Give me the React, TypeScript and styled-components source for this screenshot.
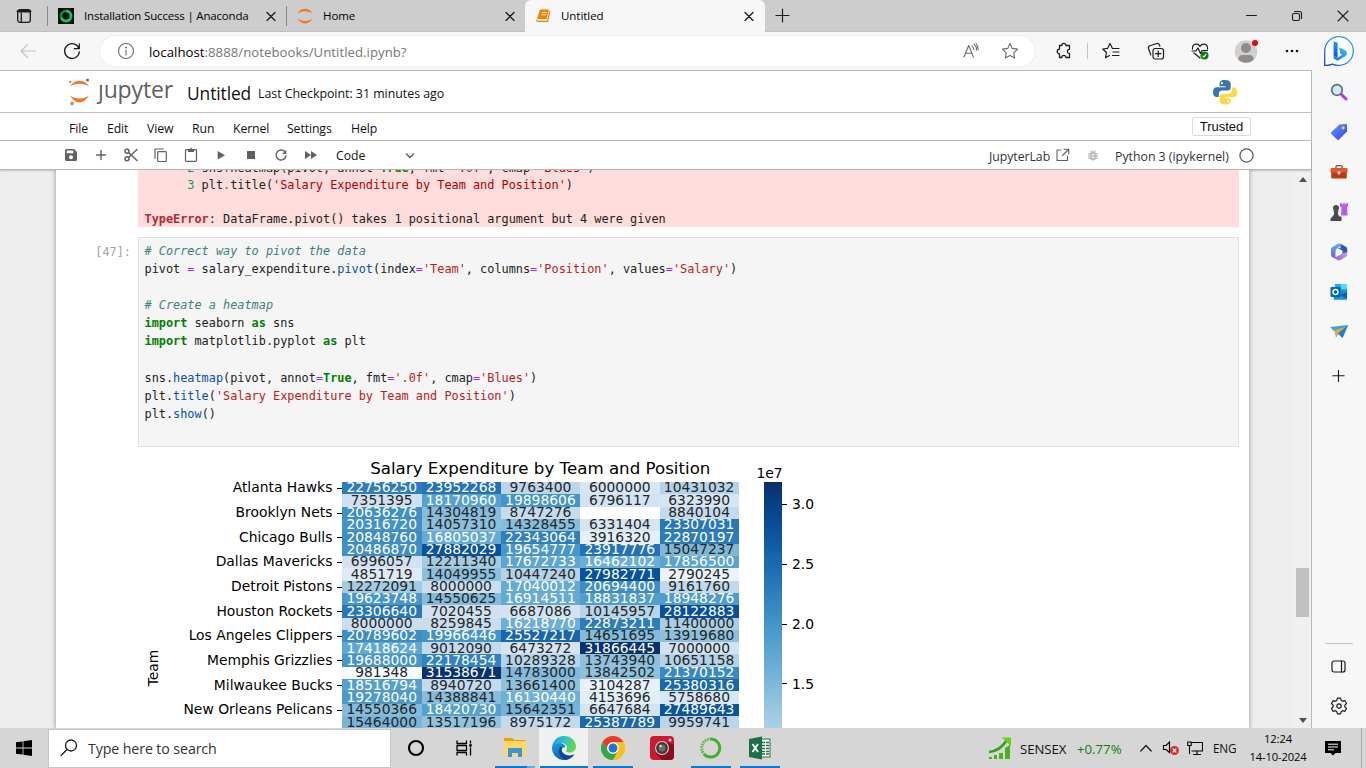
import React from "react";
import styled, { createGlobalStyle } from "styled-components";

const Global = createGlobalStyle`
  * { box-sizing: border-box; }
  html, body { margin: 0; padding: 0; overflow: hidden; }
  body { font-family: "Open Sans", "Noto Sans", sans-serif; color: #111; }
  svg { display: block; flex: none; }
`;

/* ---------- shared pieces ---------- */

const Screen = styled.div`
  width: 1366px;
  height: 768px;
  display: flex;
  flex-direction: column;
  background: #f7f7f7;
  overflow: hidden;
`;

const Slot = styled.div<{ $w: number; $ml?: number; $bg?: string }>`
  width: ${(p) => p.$w}px;
  margin-left: ${(p) => p.$ml ?? 0}px;
  background: ${(p) => p.$bg ?? "transparent"};
  height: 100%;
  flex: none;
  display: flex;
  align-items: center;
  justify-content: center;
`;

const Label = styled.span<{ $size: number; $ls?: number; $color?: string; $ml?: number; $w?: number; $mt?: number }>`
  font-size: ${(p) => p.$size}px;
  letter-spacing: ${(p) => p.$ls ?? 0}px;
  color: ${(p) => p.$color ?? "#111"};
  margin-left: ${(p) => p.$ml ?? 0}px;
  margin-top: ${(p) => p.$mt ?? 0}px;
  width: ${(p) => (p.$w ? p.$w + "px" : "auto")};
  flex: none;
  white-space: pre;
  line-height: 20px;
`;

const Host = styled.span`
  color: #000;
`;

const Grow = styled.div`
  flex: 1;
`;

type IconProps = { w: number; h?: number; children: React.ReactNode; color?: string; sw?: number };
const Line = ({ w, h = w, children, color = "#1b1b1b", sw = 1.1 }: IconProps) => (
  <svg width={w} height={h} viewBox={`0 0 ${w} ${h}`} fill="none" stroke={color} strokeWidth={sw} strokeLinecap="round" strokeLinejoin="round">
    {children}
  </svg>
);
const Solid = ({ w, h = w, children, color = "#616161" }: IconProps) => (
  <svg width={w} height={h} viewBox={`0 0 ${w} ${h}`} fill={color}>
    {children}
  </svg>
);

/* ---------- tab strip ---------- */

const TabStrip = styled.div`
  height: 32px;
  flex: none;
  display: flex;
  background: #cdcdcd;
  border-bottom: 1px solid #c0c0c0;
`;

const Divider = styled.div<{ $h: number; $color: string }>`
  width: 1px;
  height: ${(p) => p.$h}px;
  align-self: center;
  background: ${(p) => p.$color};
  flex: none;
`;

const Tab = styled.div<{ $w: number; $active?: boolean }>`
  width: ${(p) => p.$w}px;
  height: ${(p) => (p.$active ? 32 : 31)}px;
  flex: none;
  display: flex;
  align-items: center;
  padding: 0 0 ${(p) => (p.$active ? 1 : 0)}px 10px;
  background: ${(p) => (p.$active ? "#f7f7f7" : "transparent")};
  border-radius: 6px 6px 0 0;
`;

const TabTitle = styled.span<{ $ls: number }>`
  flex: 1;
  margin-left: 10px;
  font-size: 11.5px;
  letter-spacing: ${(p) => p.$ls}px;
  white-space: nowrap;
  color: #000;
`;

const CloseX = () => (
  <Line w={10} sw={1.3}>
    <path d="M1 1.500L9 9.500M9 1.500L1 9.500" />
  </Line>
);

const JupyterMoons = () => (
  <svg width="16" height="16" viewBox="0 0 16 16" fill="#f37726">
    <path d="M.8 5.600C2 2.600 4.600 .7 8 .7s6 1.900 7.200 4.900C13.400 4.100 10.900 3.200 8 3.200S2.600 4.100 .8 5.600z" />
    <path d="M.8 10.600C2 13.600 4.600 15.500 8 15.500s6-1.900 7.200-4.900C13.400 12.100 10.900 13 8 13S2.600 12.100 .8 10.600z" />
  </svg>
);

const Tabs = () => (
  <TabStrip>
    <Slot $w={47}>
      <Line w={16} sw={1.3}>
        <rect x="1.700" y="1.700" width="12.600" height="12.600" rx="2.200" />
        <path d="M2 3.300h12" strokeWidth="2.600" />
        <path d="M5.300 5v9" />
      </Line>
    </Slot>
    <Divider $h={20} $color="#8a8a8a" />
    <Tab $w={238}>
      <svg width="16" height="16" viewBox="0 0 16 16">
        <rect width="16" height="16" fill="#0a0f12" />
        <circle cx="8" cy="8" r="5" fill="none" stroke="#0e8f3c" strokeWidth="2.600" />
        <path d="M8 3A5 5 0 1 1 3.500 10" fill="none" stroke="#1fc258" strokeWidth="2.600" />
      </svg>
      <TabTitle $ls={-0.18}>Installation Success | Anaconda</TabTitle>
      <Slot $w={30}><CloseX /></Slot>
    </Tab>
    <Divider $h={20} $color="#8a8a8a" />
    <Tab $w={238}>
      <JupyterMoons />
      <TabTitle $ls={-0.1}>Home</TabTitle>
      <Slot $w={30}><CloseX /></Slot>
    </Tab>
    <Tab $w={240} $active>
      <svg width="16" height="16" viewBox="0 0 16 16">
        <path d="M5 1.500h9L11.500 11H3.500Q2.200 11 1.800 12z" fill="#f77f00" />
        <path d="M14.900 3.200L12.500 13.300H3Q1.600 13.300 1.700 11.700" fill="none" stroke="#f77f00" strokeWidth="1.200" />
        <path d="M6.900 4.500h4.800M6.300 6.700h4.800" stroke="#fff" strokeWidth="1" />
      </svg>
      <TabTitle $ls={-0.05}>Untitled</TabTitle>
      <Slot $w={32}><CloseX /></Slot>
    </Tab>
    <Slot $w={35}>
      <Line w={15} sw={1.2}><path d="M7.500 1v13M1 7.500h13" /></Line>
    </Slot>
    <Grow />
    <Slot $w={46}><Line w={11} sw={1}><path d="M.5 5.500h10" /></Line></Slot>
    <Slot $w={46}>
      <Line w={12} sw={1.1}>
        <rect x="1.500" y="3.500" width="7" height="7" rx="1.500" />
        <path d="M3.500 1.500H8.500a2 2 0 0 1 2 2V8.500" />
      </Line>
    </Slot>
    <Slot $w={46}><Line w={12} sw={1.1}><path d="M1 1L11 11M11 1L1 11" /></Line></Slot>
  </TabStrip>
);

/* ---------- address bar ---------- */

const NavBar = styled.div`
  height: 38px;
  flex: none;
  display: flex;
  align-items: center;
  padding-left: 6px;
  background: #f7f7f7;
`;

const Omnibox = styled.div`
  width: 935px;
  height: 30px;
  margin-left: 6px;
  border-radius: 15px;
  background: #fff;
  box-shadow: 0 0 2px rgba(0, 0, 0, 0.12);
  display: flex;
  align-items: center;
  padding: 0 6px 0 17px;
`;

const BingIcon = () => (
  <svg width="32" height="32" viewBox="0 0 32 32">
    <defs>
      <linearGradient id="bingRing" x1="1" y1="0" x2="0" y2="1">
        <stop offset="0" stopColor="#22a7e8" />
        <stop offset=".5" stopColor="#2b8fe6" />
        <stop offset="1" stopColor="#1c3fae" />
      </linearGradient>
      <linearGradient id="bingB" x1="0" y1="0" x2="0" y2="1">
        <stop offset="0" stopColor="#1ba0f2" />
        <stop offset="1" stopColor="#174ae0" />
      </linearGradient>
      <linearGradient id="bingC" x1="0" y1="1" x2="1" y2="0">
        <stop offset="0" stopColor="#1a6ff0" />
        <stop offset="1" stopColor="#36c6f4" />
      </linearGradient>
    </defs>
    <path d="M1.700 30.300V16A14.300 14.300 0 1 1 16 30.300Q12 30.500 9.500 29.200Q6 30.600 1.700 30.300z" fill="#fff" stroke="url(#bingRing)" strokeWidth="1.300" />
    <path d="M10.600 6.200l4 1.600v14.900l-4-2.200z" fill="url(#bingB)" />
    <path d="M16 12.300l6.500 3.200q1.800 1 1.400 3.400-.3 1.600-2 2.600l-7.300 4.200-4-2.300v-2.900l4 2.200 4.500-3-1.800-1z" fill="url(#bingC)" />
  </svg>
);

const Navigation = () => (
  <NavBar>
    <Slot $w={44}><Line w={16} color="#c2c2c2"><path d="M15.500 8H1M7.500 1.500L1 8l6.500 6.500" /></Line></Slot>
    <Slot $w={44}>
      <Line w={18} sw={1.3}><path d="M16 6.500A7.400 7.400 0 1 0 16.400 9.800M16.300 1.800v4.900h-4.900" /></Line>
    </Slot>
    <Omnibox>
      <Line w={18} color="#6b6b6b">
        <circle cx="9" cy="9" r="7.500" />
        <path d="M9 8v5" />
        <circle cx="9" cy="5.500" r=".4" />
      </Line>
      <Label $size={13.2} $ls={0.03} $ml={14} $mt={1} $color="#777">
        <Host>localhost</Host>:8888/notebooks/Untitled.ipynb?
      </Label>
      <Grow />
      <Slot $w={39}>
        <Line w={18} color="#6b6b6b">
          <path d="M2 15L6.700 3.500L11.400 15M3.500 11.300h6.400M10 3.800q1.800 1.500 1.800 4M12 2.200q2.700 2.300 2.700 6M14 1.500q2.200 2.500 2.200 6" />
        </Line>
      </Slot>
      <Slot $w={39}>
        <Line w={18} color="#6b6b6b">
          <path d="M9 1.500l2.300 4.900 5.300.7-3.900 3.700 1 5.300L9 13.500l-4.700 2.600 1-5.300L1.400 7.100l5.300-.7z" />
        </Line>
      </Slot>
    </Omnibox>
    <Slot $w={46} $ml={6}>
      <Line w={18} sw={1.3}>
        <path d="M4.500 3.500H6.800a2.100 2.100 0 0 1 4.200 0H14.500V7.300a2.100 2.100 0 0 0 0 4.200v4H11a2.100 2.100 0 0 0-4.200 0H4.500V11.800a2.200 2.200 0 1 1 0-4.600z" />
      </Line>
    </Slot>
    <Divider $h={16} $color="#c4c4c4" />
    <Slot $w={46}>
      <Line w={18} sw={1.2}>
        <path d="M10.500 6.500L8 1.500L5.700 6.300l-5 .7 3.700 3.500-.9 5.200 4-2.200M11 6.500h6M11 10h6M10.500 13.500h6.500" />
      </Line>
    </Slot>
    <Slot $w={44}>
      <Line w={18} sw={1.2}>
        <rect x="6" y="6.500" width="10.500" height="10.500" rx="2.200" />
        <path d="M11.200 9v5.500M8.500 11.700h5.500M3.800 13L1.500 6.500Q1 4.500 3 3.700L9.500 1.500Q11.700 1 12.500 3l.4 1.300" />
      </Line>
    </Slot>
    <Slot $w={44}>
      <Line w={18} sw={1.2}>
        <path d="M1.500 7Q1 2.500 5 2.200Q7.500 2 9 4.300Q10.500 2 13 2.200Q17 2.500 16.500 7M1 9h4l2-3 2.500 5.500L11 8.500h5.500M3 11l6 5" />
        <circle cx="13.500" cy="13.500" r="4" fill="#0f7b0f" stroke="none" />
        <path d="M12 14.200l1 .8 2-2.600" stroke="#fff" />
      </Line>
    </Slot>
    <Slot $w={48}>
      <svg width="26" height="26" viewBox="0 0 26 26">
        <circle cx="13" cy="13.500" r="11.200" fill="#d2d0ce" />
        <circle cx="13" cy="10" r="5" fill="#8f8c89" />
        <path d="M5.300 21.500q0-4.500 4.200-4.500h7q4.200 0 4.200 4.500Q17.500 24.700 13 24.700t-7.700-3.200z" fill="#8f8c89" />
        <circle cx="22" cy="5" r="3" fill="#e30613" />
      </svg>
    </Slot>
    <Slot $w={44}>
      <Solid w={14} h={4} color="#111"><circle cx="2" cy="2" r="1.300" /><circle cx="7" cy="2" r="1.300" /><circle cx="12" cy="2" r="1.300" /></Solid>
    </Slot>
    <Slot $w={50}><BingIcon /></Slot>
  </NavBar>
);

/* ---------- jupyter page frame ---------- */

const Middle = styled.div`
  flex: 1;
  min-height: 0;
  display: flex;
`;

const Page = styled.div`
  width: 1312px;
  flex: none;
  border-top: 1px solid #b9b9b9;
  border-right: 1px solid #b9b9b9;
  background: #fff;
  display: flex;
  flex-direction: column;
`;

const Bar = styled.div<{ $h: number; $pl: number }>`
  height: ${(p) => p.$h}px;
  padding-left: ${(p) => p.$pl}px;
  flex: none;
  border-bottom: 1px solid #bdbdbd;
  background: #fff;
  display: flex;
  align-items: center;
`;

const Wordmark = styled.span`
  font-family: "Open Sans", sans-serif;
  font-size: 23px;
  line-height: 30px;
  letter-spacing: -0.15px;
  color: #616161;
  width: 89px;
  margin-left: 6px;
  margin-top: -6px;
`;

const TrustedButton = styled.div`
  width: 59px;
  height: 19px;
  border: 1px solid #dcdcdc;
  border-radius: 2px;
  font: 13px/17px "Liberation Sans", Arial, sans-serif;
  text-align: center;
  color: #111;
  margin-right: 60px;
`;

const menus: [string, number][] = [["File", 38], ["Edit", 40], ["View", 45], ["Run", 41], ["Kernel", 54], ["Settings", 64], ["Help", 40]];

const LogoMark = styled.svg`
  margin-top: -2px;
`;
const PythonMark = styled.svg`
  margin-right: 73px;
`;

const PageHeader = () => (
  <>
    <Bar $h={42} $pl={68}>
      <LogoMark width="24" height="30" viewBox="0 0 24 30">
        <path d="M2 10.500C4 7 7.500 4.800 11.500 4.800S19 7 21 10.500C18.500 8.700 15.200 7.700 11.500 7.700S4.500 8.700 2 10.500z" fill="#f37726" />
        <path d="M2 19.500C4 23 7.500 26.400 11.500 26.400S19 23 21 19.500C18.500 21.300 15.200 22.500 11.500 22.500S4.500 21.300 2 19.500z" fill="#f37726" />
        <circle cx="19.500" cy="4" r="1.600" fill="#767677" />
        <circle cx="2.300" cy="6" r="1.100" fill="#767677" />
        <circle cx="4" cy="27.500" r="2" fill="#9e9e9e" />
      </LogoMark>
      <Wordmark>ȷupyter</Wordmark>
      <Label $size={17.4} $ls={-0.1} $w={71} $mt={3}>Untitled</Label>
      <Label $size={12.4} $ls={-0.03} $mt={4}>Last Checkpoint: 31 minutes ago</Label>
      <Grow />
      <PythonMark width="26" height="26" viewBox="0 0 26 26">
        <path d="M13 1C8 1 7.500 3 7.500 5v2.300h6v1H4.800C2.500 8.300 1 10 1 13s1.300 5 3.500 5h2.300v-3c0-2 1.500-3.500 3.500-3.500h5.500c1.700 0 2.900-1.200 2.900-3V5C18.700 2.500 16.500 1 13 1z" fill="#3a77a9" />
        <circle cx="9.900" cy="4.100" r="1.100" fill="#fff" />
        <path d="M13.200 25.500c5 0 5.500-2 5.500-4v-2.300h-6v-1h8.700c2.300 0 3.800-1.700 3.800-4.700s-1.300-5-3.500-5h-2v3c0 2-1.500 3.500-3.500 3.500h-5.500c-1.700 0-3 1.200-3 3v3.500c0 2.500 2 4 5.500 4z" fill="#ffd845" />
        <circle cx="16.200" cy="22.300" r="1.100" fill="#fff" />
      </PythonMark>
    </Bar>
    <Bar $h={28} $pl={69}>
      {menus.map(([name, w]) => (
        <Label key={name} $size={12.3} $ls={-0.12} $w={w} $mt={5}>{name}</Label>
      ))}
      <Grow />
      <TrustedButton>Trusted</TrustedButton>
    </Bar>
  </>
);

const ToolRow = styled(Bar)`
  position: relative;
  border-bottom-color: #b5b5b5;
  box-shadow: 0 1px 2px rgba(0, 0, 0, 0.18);
`;

const NotebookToolbar = () => (
  <ToolRow $h={29} $pl={56}>
    <Slot $w={30}>
      <Solid w={14}><path fillRule="evenodd" d="M2.500 1H10l3 3v7.500a1.500 1.500 0 0 1-1.500 1.500h-9A1.500 1.500 0 0 1 1 11.500v-9A1.500 1.500 0 0 1 2.500 1zM2.700 2.500v2.700h6.600V2.500zM7 7.300a2 2 0 1 0 0 4 2 2 0 0 0 0-4z" /></Solid>
    </Slot>
    <Slot $w={30}><Line w={12} color="#616161" sw={1.400}><path d="M6 1.500v9M1.500 6h9" /></Line></Slot>
    <Slot $w={30}>
      <Line w={16} color="#616161" sw={1.5}>
        <circle cx="4" cy="4.200" r="2" /><circle cx="4" cy="11.800" r="2" />
        <path d="M5.500 5.500L14 13.500M5.500 10.500L14 2.500" />
      </Line>
    </Slot>
    <Slot $w={30}>
      <Line w={16} color="#616161" sw={1.2}><path d="M2 11.500V2H10.500" /><rect x="4.700" y="4.700" width="8.600" height="9.800" rx=".8" /></Line>
    </Slot>
    <Slot $w={30}>
      <Line w={16} color="#616161" sw={1.2}><rect x="2.500" y="2.600" width="11" height="11.800" rx=".8" /><path d="M5.500 2.500h5v2h-5z" fill="#616161" /><path d="M8 1.200v1" /></Line>
    </Slot>
    <Slot $w={30}><Solid w={12}><path d="M2.700 2L10 6.200L2.700 10.500z" /></Solid></Slot>
    <Slot $w={30}><Solid w={8}><rect width="8" height="8" /></Solid></Slot>
    <Slot $w={30}><Line w={14} color="#616161" sw={1.4}><path d="M10.800 3.600A5 5 0 1 0 12 8" /><path d="M12.300 1.800V6H8.200z" fill="#616161" stroke="none" /></Line></Slot>
    <Slot $w={30}><Solid w={12}><path d="M0 2L6 6L0 10zM6 2L12 6L6 10z" /></Solid></Slot>
    <Label $size={12.2} $ml={10} $w={68} $mt={1}>Code</Label>
    <Line w={12} color="#616161" sw={1.500}><path d="M2.500 5L6 8.500L9.500 5" /></Line>
    <Grow />
    <Label $size={12.3} $ls={-0.05} $w={67} $mt={4} $color="#333">JupyterLab</Label>
    <Line w={14} color="#616161" sw={1.100}><path d="M5 2H1V12.500H11.500V8M8 1.200H12.800V6M12.500 1.500L6.500 7.500" /></Line>
    <Slot $w={45}>
      <Solid w={12} color="#bdbdbd">
        <path d="M4 1L5 2.300H7L8 1l.8.700-.8 1.200q.7.500 1 1.300h2v1.200H9.300v1H11v1.300H9.300v1H11V10H8.900Q8 11.500 6 11.500T3.100 10H1V8.700h1.700v-1H1V6.400h1.700v-1H1V4.200h2q.3-.8 1-1.300L3.200 1.700z" />
        <path d="M4.800 5.200h2.400v1H4.800zM4.800 7.700h2.400v1H4.800z" fill="#fff" />
      </Solid>
    </Slot>
    <Label $size={12.3} $ls={0} $w={124} $mt={4} $color="#333">Python 3 (ipykernel)</Label>
    <Line w={15} color="#555" sw={1.2}><circle cx="7.500" cy="7.500" r="6.600" /></Line>
    <Slot $w={57} />
  </ToolRow>
);

/* ---------- notebook ---------- */

const Scroller = styled.div`
  flex: 1;
  min-height: 0;
  display: flex;
  background: #eeeeee;
  padding-left: 56px;
`;

const Notebook = styled.div`
  width: 1193px;
  flex: none;
  background: #fff;
  box-shadow: 0 0 4px 1px rgba(0, 0, 0, 0.28);
  overflow: hidden;
  clip-path: inset(0 -8px);
`;

const Traceback = styled.div`
  margin-left: 82px;
  width: 1101px;
  height: 57px;
  padding-left: 6.5px;
  background: #ffdddd;
  overflow: hidden;
  display: flex;
  flex-direction: column;
  justify-content: flex-end;
`;

const CodeLine = styled.div<{ $h: number }>`
  height: ${(p) => p.$h}px;
  line-height: ${(p) => p.$h}px;
  flex: none;
  font-family: "DejaVu Sans Mono", monospace;
  font-size: 11.87px;
  white-space: pre;
  color: #212121;
`;

const TraceLine = styled(CodeLine)`
  line-height: 19px;
`;

const CellRow = styled.div`
  display: flex;
  margin-top: 10px;
`;

const Prompt = styled.div`
  width: 82px;
  padding: 6px 7px 0 0;
  text-align: right;
  font: 11.87px/18px "DejaVu Sans Mono", monospace;
  color: #a3a3a3;
`;

const Editor = styled.div`
  width: 1101px;
  height: 210px;
  border: 1px solid #e0e0e0;
  background: #f5f5f5;
  padding: 4px 0 0 5.5px;
`;

const Tok = styled.span<{ $k: string }>`
  color: ${(p) => (({ c: "#408080", o: "#aa22ff", f: "#0550ae", s: "#ba2121", k: "#008000", e: "#b22b31", n: "#00a250", t: "#af0000", d: "#666" }) as Record<string, string>)[p.$k] ?? "inherit"};
  font-style: ${(p) => (p.$k === "c" ? "italic" : "normal")};
  font-weight: ${(p) => (p.$k === "k" || p.$k === "e" ? 700 : 400)};
`;

type Part = string | [string, string];
const source: Part[][] = [
  [["c", "# Correct way to pivot the data"]],
  ["pivot ", ["o", "="], " salary_expenditure.", ["f", "pivot"], "(index", ["o", "="], ["s", "'Team'"], ", columns", ["o", "="], ["s", "'Position'"], ", values", ["o", "="], ["s", "'Salary'"], ")"],
  [],
  [["c", "# Create a heatmap"]],
  [["k", "import"], " seaborn ", ["k", "as"], " sns"],
  [["k", "import"], " matplotlib.pyplot ", ["k", "as"], " plt"],
  [],
  ["sns.", ["f", "heatmap"], "(pivot, annot", ["o", "="], ["k", "True"], ", fmt", ["o", "="], ["s", "'.0f'"], ", cmap", ["o", "="], ["s", "'Blues'"], ")"],
  ["plt.", ["f", "title"], "(", ["s", "'Salary Expenditure by Team and Position'"], ")"],
  ["plt.", ["f", "show"], "()"],
];
const trace: Part[][] = [
  ["      ", ["n", "2"], " sns", ["d", "."], "heatmap(pivot, annot", ["d", "="], ["k", "True"], ", fmt", ["d", "="], ["t", "'.0f'"], ", cmap", ["d", "="], ["t", "'Blues'"], ")"],
  ["      ", ["n", "3"], " plt", ["d", "."], "title(", ["t", "'Salary Expenditure by Team and Position'"], ")"],
  [],
  [["e", "TypeError"], ": DataFrame.pivot() takes 1 positional argument but 4 were given"],
];

const tokens = (row: Part[]) => row.map((p, j) => (typeof p === "string" ? p : <Tok key={j} $k={p[0]}>{p[1]}</Tok>));

/* ---------- heatmap ---------- */

const teams = ["Atlanta Hawks", "Brooklyn Nets", "Chicago Bulls", "Dallas Mavericks", "Detroit Pistons", "Houston Rockets", "Los Angeles Clippers", "Memphis Grizzlies", "Milwaukee Bucks", "New Orleans Pelicans"];
const salaries: (number | null)[][] = [
  [22756250, 23952268, 9763400, 6000000, 10431032],
  [7351395, 18170960, 19898606, 6796117, 6323990],
  [20636276, 14304819, 8747276, null, 8840104],
  [20316720, 14057310, 14328455, 6331404, 23307031],
  [20848760, 16805037, 22343064, 3916320, 22870197],
  [20486870, 27882029, 19654777, 23917776, 15047237],
  [6996057, 12211340, 17672733, 16462102, 17856500],
  [4851719, 14049955, 10447240, 27982771, 2790245],
  [12272091, 8000000, 17040012, 20694400, 9161760],
  [19623748, 14550625, 16914511, 18831837, 18948276],
  [23306640, 7020455, 6687086, 10145957, 28122883],
  [8000000, 8259845, 16218770, 22873211, 11400000],
  [20789602, 19966446, 25527217, 14651695, 13919680],
  [17418624, 9012090, 6473272, 31866445, 7000000],
  [19688000, 22178454, 10289328, 13743940, 10651158],
  [981348, 31538671, 14783000, 13842502, 21370152],
  [18516794, 8940720, 13661400, 3104287, 25380316],
  [19278040, 14388841, 16130440, 4153696, 5758680],
  [14550366, 18420730, 15642351, 6647684, 27489643],
  [15464000, 13517196, 8975172, 25387789, 9959741],
];
const blues = [[247, 251, 255], [222, 235, 247], [198, 219, 239], [158, 202, 225], [107, 174, 214], [66, 146, 198], [33, 113, 181], [8, 81, 156], [8, 48, 107]];
const MIN = 981348;
const MAX = 31866445;
const shade = (v: number) => {
  const t = ((v - MIN) / (MAX - MIN)) * 8;
  const i = Math.min(7, Math.floor(t));
  return `rgb(${blues[i].map((c, k) => Math.round(c + (blues[i + 1][k] - c) * (t - i))).join(",")})`;
};
const colX = (c: number) => Math.round(342.3 + 79.36 * c);
const rowY = (r: number) => Math.round(482 + 12.32 * r);
const baseline = (r: number) => Math.floor(482 + 12.32 * (r + 0.5) + 4.8);
const tickY = (v: number) => 482.3 + ((MAX - v) / (MAX - MIN)) * 369.6;

const Figure = styled.svg`
  margin-left: 82px;
  font-family: "DejaVu Sans", sans-serif;
  font-size: 13.89px;
`;

const Heatmap = () => (
  <Figure width="700" height="281" viewBox="138 447 700 281">
    <defs>
      <linearGradient id="cbar" x1="0" y1="1" x2="0" y2="0">
        {blues.map((c, i) => <stop key={i} offset={i / 8} stopColor={`rgb(${c.join(",")})`} />)}
      </linearGradient>
    </defs>
    <text x="540.300" y="474" fontSize="16.670" textAnchor="middle">Salary Expenditure by Team and Position</text>
    {salaries.map((row, r) => row.map((v, c) => v !== null && (
      <rect key={`${r}-${c}`} x={colX(c)} y={rowY(r)} width={colX(c + 1) - colX(c)} height={rowY(r + 1) - rowY(r)} fill={shade(v)} shapeRendering="crispEdges" />
    )))}
    {salaries.map((row, r) => row.map((v, c) => v !== null && (
      <text key={`${r}-${c}`} x={381.7 + 79.36 * c} y={baseline(r)} textAnchor="middle" fill={v > 16000000 ? "#fff" : "#262626"}>{v}</text>
    )))}
    {teams.map((t, i) => (
      <g key={t}>
        <text x="332.400" y={baseline(i * 2)} textAnchor="end">{t}</text>
        <rect x="337" y={Math.floor(482.3 + 12.32 * (i * 2 + 0.5))} width="5" height="1" fill="#000" />
      </g>
    ))}
    <text transform="translate(158 668) rotate(-90)" textAnchor="middle">Team</text>
    <rect x="764" y="482" width="18" height="370" fill="url(#cbar)" />
    <text x="756.500" y="478">1e7</text>
    {[3, 2.5, 2, 1.5].map((v) => (
      <g key={v}>
        <rect x="782" y={Math.round(tickY(v * 1e7) - 0.7)} width="5" height="1" fill="#000" />
        <text x="792" y={Math.round(tickY(v * 1e7) + 4.8)}>{v.toFixed(1)}</text>
      </g>
    ))}
  </Figure>
);

/* ---------- scrollbar ---------- */

const Track = styled.div`
  width: 17px;
  background: #f0f0f0;
  display: flex;
  flex-direction: column;
  align-items: center;
  padding: 7px 0 5px;
`;
const Thumb = styled.div`
  width: 13px;
  height: 49px;
  background: #c1c1c1;
  margin-top: 386px;
`;

/* ---------- edge sidebar ---------- */

const Sidebar = styled.div`
  width: 54px;
  display: flex;
  flex-direction: column;
  align-items: center;
  padding: 2px 1px 2px 0;
  background: #f7f7f7;
`;
const SideSlot = styled.div<{ $h?: number }>`
  height: ${(p) => p.$h ?? 40}px;
  flex: none;
  display: flex;
  align-items: center;
  justify-content: center;
`;
const SideRule = styled.div`
  width: 28px;
  height: 1px;
  background: #c4c4c4;
  margin-bottom: 2px;
`;

const EdgeSidebar = () => (
  <Sidebar>
    <SideSlot>
      <svg width="18" height="18" viewBox="0 0 18 18">
        <path d="M11 11l5 5" stroke="#b136f0" strokeWidth="3" strokeLinecap="round" />
        <circle cx="7" cy="7" r="5.300" fill="#cdeafc" stroke="#5f6a72" strokeWidth="1.700" />
      </svg>
    </SideSlot>
    <SideSlot>
      <svg width="18" height="18" viewBox="0 0 18 18">
        <defs><linearGradient id="tag" x1="0" y1="0" x2="1" y2="1"><stop offset="0" stopColor="#6a9bff" /><stop offset="1" stopColor="#2f3fe8" /></linearGradient></defs>
        <path d="M9.500 1.500L16 1q1 0 1 1v6.500L9 16.500q-1 .8-2 0L1.400 11q-.8-1 0-2z" fill="url(#tag)" />
        <circle cx="13.200" cy="4.800" r="1.600" fill="#ffd23e" />
      </svg>
    </SideSlot>
    <SideSlot>
      <svg width="18" height="18" viewBox="0 0 18 18">
        <path d="M6 5V3.500q0-.9 1-.9h4q1 0 1 .9V5" fill="none" stroke="#77574d" strokeWidth="1.300" />
        <rect x=".5" y="5" width="17" height="5" rx="1" fill="#e2562a" />
        <rect x="1.200" y="9.500" width="15.600" height="6" rx="1" fill="#b93a15" />
        <rect x="7.500" y="8" width="3" height="3.500" rx="1" fill="#d8d8d8" />
      </svg>
    </SideSlot>
    <SideSlot>
      <svg width="18" height="20" viewBox="0 0 18 20">
        <path d="M10 1h1.700v1.300h1.500V1h1.600v1.300h1.500V1H18v3.500l-1 1 .6 8H11l.500-8-1.500-1z" fill="#b65cf0" />
        <circle cx="6" cy="6" r="3" fill="#4d4d4d" />
        <path d="M3.500 8.500h5v1.500H7.800q.2 3 1.700 4.500H11.500V19H.5v-2.500l2-2Q4.200 13 4.300 10H3.500z" fill="#4a4a4a" />
      </svg>
    </SideSlot>
    <SideSlot>
      <svg width="18" height="18" viewBox="0 0 18 18">
        <defs>
          <linearGradient id="loopL" x1="0" y1="0" x2="0" y2="1"><stop offset="0" stopColor="#57b4ee" /><stop offset="1" stopColor="#7a5fc6" /></linearGradient>
          <linearGradient id="loopB" x1="0" y1="0" x2="1" y2="0"><stop offset="0" stopColor="#8258c4" /><stop offset="1" stopColor="#c49cf0" /></linearGradient>
        </defs>
        <path d="M8 .8L2 4.200q-1 .6-1 2V12q0 1.300 1.500 2.200L5.500 15.500V8.500q0-2 1.500-3L10.500 3V.8Q9 .2 8 .8z" fill="url(#loopL)" />
        <path d="M10.500.8V5.200L7.500 5.500l5 2.500v5.500L16 11.500q1.200-.8 1.200-2V6q0-1.300-1-2z" fill="#2f58b8" />
        <path d="M17.200 9v3q0 1.200-1 1.800l-6 3.400q-1 .6-2.200 0L2 13.800q3 1 5-.3l5.500-3.300z" fill="url(#loopB)" />
        <path d="M9 6l3 1.500v3.300L9 12.500 6 10.800V7.500z" fill="#f7f7f7" />
      </svg>
    </SideSlot>
    <SideSlot>
      <svg width="18" height="18" viewBox="0 0 18 18">
        <rect x="5" y="1" width="12" height="8" fill="#28a8ea" />
        <rect x="11" y="1" width="6" height="5" fill="#50d9ff" />
        <path d="M3 8l14-1v9q0 .8-.8.8H4z" fill="#1490df" />
        <path d="M17 9v7L10 12z" fill="#0f5fa8" />
        <rect x="0.500" y="4" width="10" height="10" rx="1" fill="#0364b8" />
        <circle cx="5.500" cy="9" r="2.500" fill="none" stroke="#fff" strokeWidth="1.400" />
      </svg>
    </SideSlot>
    <SideSlot>
      <svg width="18" height="18" viewBox="0 0 18 18">
        <path d="M0 4L18 2 12.500 15 8.500 11 6 14.500 5 9z" fill="#36a3ee" />
        <path d="M3.500 7.500L16.500 3.500 8.300 10.500 6 14.500 5 9z" fill="#f5a623" />
        <path d="M8 10.500L18 2 12.500 15z" fill="#1b7fd6" />
      </svg>
    </SideSlot>
    <SideSlot $h={48}><Line w={13} sw={1.1}><path d="M6.500 0v11.400M.8 5.700h11.400" /></Line></SideSlot>
    <Grow />
    <SideRule />
    <SideSlot>
      <Line w={15} h={13} sw={1.2}><rect x="1" y="1" width="13" height="11" rx="2" /><path d="M10.500 1v11" /></Line>
    </SideSlot>
    <SideSlot>
      <Line w={18} sw={1.2}>
        <path d="M7.400 1.200h3.200l.6 2.200 1.500.9 2.200-.6 1.600 2.800-1.600 1.600v1.800l1.600 1.600-1.600 2.800-2.200-.6-1.500.9-.6 2.200H7.400l-.6-2.200-1.500-.9-2.200.6-1.600-2.800 1.600-1.600V8.100L1.500 6.500l1.600-2.800 2.200.6 1.500-.9z" />
        <circle cx="9" cy="9" r="2.200" />
      </Line>
    </SideSlot>
  </Sidebar>
);

/* ---------- windows taskbar ---------- */

const Taskbar = styled.div`
  height: 40px;
  flex: none;
  display: flex;
  align-items: center;
  background: #d6d6d6;
`;
const SearchBox = styled.div`
  width: 343px;
  height: 39px;
  background: #fff;
  border: 1px solid #c6c6c6;
  display: flex;
  align-items: center;
  padding-left: 11px;
`;
const AppTile = styled.div<{ $bar?: number; $active?: boolean }>`
  width: 49px;
  height: 40px;
  flex: none;
  display: flex;
  align-items: center;
  justify-content: center;
  background: linear-gradient(#0a78d4, #0a78d4) center bottom / ${(p) => p.$bar ?? 0}px 2px no-repeat, ${(p) => (p.$active ? "#f0f0f0" : "transparent")};
`;
const StackedTile = styled(AppTile)`
  background: linear-gradient(90deg, #0a78d4 32px, #5fa9e6 32px) center bottom / 40px 2px no-repeat;
`;
const Clock = styled.div`
  width: 70px;
  text-align: center;
  font-size: 11.2px;
  line-height: 18px;
  letter-spacing: -0.15px;
  white-space: nowrap;
  color: #000;
`;
const DesktopEdge = styled.div`
  width: 5px;
  height: 100%;
  border-left: 1px solid #a5a5a5;
`;

const AnacondaRing = () => (
  <svg width="24" height="24" viewBox="0 0 24 24">
    <path d="M12 3A9 9 0 1 1 5 18" fill="none" stroke="#43b02a" strokeWidth="3" />
    <path d="M12 3A9 9 0 0 0 5 18" fill="none" stroke="#5cb548" strokeWidth="3" strokeDasharray="1.500 1" />
  </svg>
);

const WindowsTaskbar = () => (
  <Taskbar>
    <Slot $w={48}>
      <Solid w={16} color="#000"><path d="M0 2.300L6.600 1.400V7.600H0zM7.400 1.300L16 0V7.600H7.400zM0 8.400H6.600V14.600L0 13.700zM7.400 8.400H16V16L7.400 14.700z" /></Solid>
    </Slot>
    <SearchBox>
      <Line w={18} sw={1.3}><circle cx="11" cy="6.500" r="5.500" /><path d="M7 10.500L1 16.500" /></Line>
      <Label $size={14.2} $ls={-0.1} $ml={10} $mt={1} $color="#333">Type here to search</Label>
    </SearchBox>
    <Slot $w={50}><Line w={18} sw={2.1} color="#000"><circle cx="9" cy="9" r="7" /></Line></Slot>
    <Slot $w={46}>
      <Line w={16} sw={1.3} color="#000">
        <path d="M1 1v2.500h9.500V1M1 15v-2.500h9.500V15M1 5.500h9.500v5H1zM14.500 1v2M14.500 8v7" />
        <circle cx="14.500" cy="5.500" r=".8" fill="#000" />
      </Line>
    </Slot>
    <Slot $w={3} />
    <StackedTile>
      <svg width="22" height="20" viewBox="0 0 22 20">
        <path d="M0 1q0-1 1-1h7l2 2h11q1 0 1 1v4H0z" fill="#e2a20c" />
        <rect y="3" width="22" height="15" rx="1" fill="#ffd766" />
        <path d="M4 19V11q0-1 1-1h12q1 0 1 1v8h-4v-4H8v4z" fill="#3a94dc" />
      </svg>
    </StackedTile>
    <AppTile $bar={48} $active>
      <svg width="24" height="24" viewBox="0 0 24 24">
        <defs>
          <linearGradient id="edgeTop" x1="0" y1="0" x2="1" y2=".3"><stop offset="0" stopColor="#1e93dd" /><stop offset=".5" stopColor="#2cc0d8" /><stop offset="1" stopColor="#62d94f" /></linearGradient>
          <linearGradient id="edgeLow" x1="0" y1="0" x2=".6" y2="1"><stop offset="0" stopColor="#1b9de8" /><stop offset="1" stopColor="#0f5aa8" /></linearGradient>
        </defs>
        <path d="M0 11C1 8 4.500 6.500 8.500 7 12 7.500 13.500 9.500 13.500 11.500 12 10.500 9.500 11.500 9.500 14.500c0 3.500 3.500 5.500 7 5.500 2.500 0 4.500-1 5.500-1.800C20 22 16.500 24 12 24 5.500 24-.5 18.500 0 11z" fill="url(#edgeLow)" />
        <path d="M8 11.500C5.500 15 7 22 13.500 23.800 17.500 23.500 20.500 21.500 22.300 18.300 19 20 15 20 12 17.800 9.500 16 9 13.500 10.200 11z" fill="#0c4a94" />
        <path d="M0 11C.8 4.500 6 0 12 0c7 0 12 5 12 10.500 0 3.500-2.500 6-6 6-2.500 0-4-.8-4-1.800s1-1.200 1-3C15 9.500 13 7 9 7 4.500 7 1 9.500 0 11z" fill="url(#edgeTop)" />
      </svg>
    </AppTile>
    <AppTile $bar={40}>
      <svg width="24" height="24" viewBox="0 0 24 24">
        <circle cx="12" cy="12" r="12" fill="#fbc116" />
        <path d="M1.600 6A12 12 0 0 1 22.400 6H12a6 6 0 0 0-5.200 9z" fill="#e33b2e" />
        <path d="M1.600 6A12 12 0 0 0 12 24l5.200-9A6 6 0 0 1 6.800 15z" fill="#2da94f" />
        <path d="M22.400 6H12a6 6 0 0 1 5.200 9L12 24A12 12 0 0 0 22.400 6z" fill="#fbc116" />
        <circle cx="12" cy="12" r="5.800" fill="#fff" />
        <circle cx="12" cy="12" r="4.500" fill="#1a73e8" />
      </svg>
    </AppTile>
    <AppTile>
      <svg width="24" height="24" viewBox="0 0 24 24">
        <rect width="24" height="24" rx="4" fill="#d3162f" />
        <path d="M5 17L12 24H20q4 0 4-4V9L18 6z" fill="#8d0b1e" />
        <circle cx="12" cy="12" r="7" fill="#cfcfcf" />
        <circle cx="12" cy="12" r="5.900" fill="#3b3b3b" />
        <circle cx="12" cy="12" r="3.500" fill="#6e6e6e" />
        <circle cx="10.500" cy="10" r="1.200" fill="#ddd" />
        <circle cx="20" cy="4" r="1.500" fill="#eee" />
      </svg>
    </AppTile>
    <AppTile $bar={40}><AnacondaRing /></AppTile>
    <AppTile $bar={40}>
      <svg width="24" height="24" viewBox="0 0 24 24">
        <rect x="12" y="3" width="10" height="18" fill="#fff" stroke="#1d7044" />
        <path d="M14 6.500h3M18 6.500h3M14 9.500h3M18 9.500h3M14 12.500h3M18 12.500h3M14 15.500h3M18 15.500h3M14 18h3M18 18h3" stroke="#1d7044" strokeWidth="1.600" />
        <path d="M1 3L14 .5v23L1 21z" fill="#1d7044" />
        <path d="M4.500 8L10 16M10 8L4.500 16" stroke="#fff" strokeWidth="1.900" />
      </svg>
    </AppTile>
    <Grow />
    <svg width="24" height="24" viewBox="0 0 24 24">
      <path d="M1 23v-2h3v2zM6 23v-4h3v4zM11 23v-6h4v6zM17 23V12l5-3v14z" fill="#4caf22" />
      <path d="M1 16Q12 15 18.500 4.500" fill="none" stroke="#36a01e" strokeWidth="2.600" />
      <path d="M14 1.500H23v9z" fill="#6cd012" />
    </svg>
    <Label $size={13.2} $ls={-0.05} $ml={8} $w={57} $mt={1}>SENSEX</Label>
    <Label $size={13.2} $ls={0} $color="#107c10" $w={56} $mt={1}>+0.77%</Label>
    <Slot $w={26}><Line w={12} sw={1.3}><path d="M.8 9L6 3.500 11.200 9" /></Line></Slot>
    <Slot $w={24}>
      <svg width="18" height="16" viewBox="0 0 18 16">
        <path d="M1.500 5.500H4L7.500 2V12.500L4 9.500H1.500z" fill="none" stroke="#000" strokeWidth="1.100" />
        <circle cx="12.500" cy="10.500" r="4.500" fill="#d92c2c" />
        <path d="M10.700 8.700l3.600 3.600M14.300 8.700l-3.600 3.600" stroke="#fff" strokeWidth="1.200" />
      </svg>
    </Slot>
    <Slot $w={24}>
      <Line w={16} sw={1.1} color="#000"><path d="M4.500 2.500h11v8.500H5M10 11v3M6.500 14.500h7M.7 2h3.500v3.500H.7zM2.500 5.500v8" /></Line>
    </Slot>
    <Label $size={11.7} $ls={-0.2} $ml={6} $w={30}>ENG</Label>
    <Clock>12:24<br />14-10-2024</Clock>
    <Slot $w={40}>
      <Solid w={16} color="#000"><path d="M0 1H16V13H10.500L8 15.500 5.500 13H0z" /><path d="M3 4.200h10M3 7h10M3 9.800h6" stroke="#fff" strokeWidth="1" /></Solid>
    </Slot>
    <Slot $w={8} />
    <DesktopEdge />
  </Taskbar>
);

export default function App() {
  return (
    <Screen>
      <Global />
      <Tabs />
      <Navigation />
      <Middle>
        <Page>
          <PageHeader />
          <NotebookToolbar />
          <Scroller>
            <Notebook>
              <Traceback>
                {trace.map((row, i) => <TraceLine key={i} $h={17}>{tokens(row)}</TraceLine>)}
              </Traceback>
              <CellRow>
                <Prompt>[47]:</Prompt>
                <Editor>
                  {source.map((row, i) => <CodeLine key={i} $h={18.1}>{tokens(row)}</CodeLine>)}
                </Editor>
              </CellRow>
              <Heatmap />
            </Notebook>
            <Grow />
            <Track>
              <Solid w={8} h={5} color="#505050"><path d="M4 0L8 5H0z" /></Solid>
              <Thumb />
              <Grow />
              <Solid w={8} h={5} color="#505050"><path d="M0 0H8L4 5z" /></Solid>
            </Track>
          </Scroller>
        </Page>
        <EdgeSidebar />
      </Middle>
      <WindowsTaskbar />
    </Screen>
  );
}
